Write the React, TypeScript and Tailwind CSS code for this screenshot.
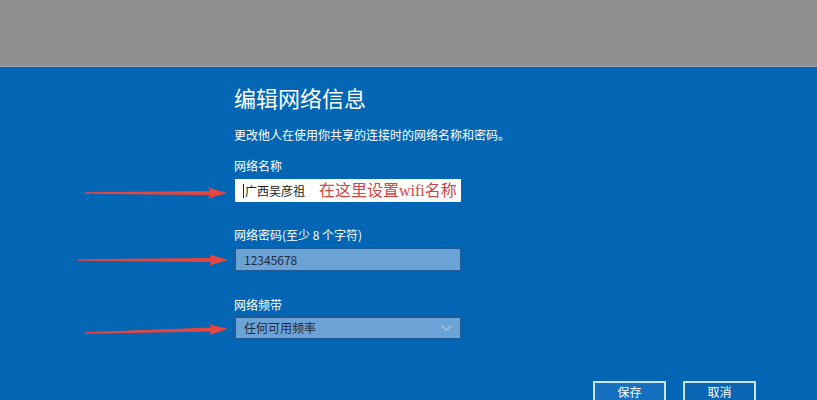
import React from "react";

const cjk = { fontFamily: '"Noto Sans CJK SC", "Noto Sans", sans-serif' };

function Arrow({ len, tilt = 0 }: { len: number; tilt?: number }) {
  const L = len;
  return (
    <svg width={L} height={14} viewBox={`0 0 ${L} 14`} className="overflow-visible">
      <g transform={`rotate(${tilt} ${L} 7)`}>
        <polygon
          points={`0,6.3 ${L - 17},5 ${L - 19},1.5 ${L},7 ${L - 19},12.5 ${L - 17},9 0,7.7`}
          fill="#e8453f"
        />
      </g>
    </svg>
  );
}

export default function App() {
  return (
    <div className="w-[817px] h-[400px] overflow-hidden flex flex-col" style={cjk}>
      <div className="h-[67px] bg-[#8e8e8e] border-b border-[#9ba6b4] shrink-0" />
      <div className="flex-1 bg-[#0366b4] pl-[234px] flex flex-col text-white">
        <div className="mt-[16px] text-[22px] leading-[28px]">编辑网络信息</div>
        <div className="mt-[16px] text-[12px] leading-[16px]">更改他人在使用你共享的连接时的网络名称和密码。</div>
        <div className="mt-[15px] text-[12px] leading-[16px]">网络名称</div>
        <div className="relative mt-[5px] ml-[1px] w-[226px] h-[23px] bg-white flex items-center pl-[8px] whitespace-nowrap">
          <div className="absolute left-[-150px] top-[7px]">
            <Arrow len={142} />
          </div>
          <span className="w-px h-[14px] bg-[#222] mr-[1px]" />
          <span className="text-[12px] text-[#1b1b1b]">广西吴彦祖</span>
          <span
            className="ml-[14px] text-[16px] leading-[20px] text-[#d24545]"
            style={{ fontFamily: '"Liberation Serif", "Noto Sans CJK SC", serif' }}
          >
            在这里设置wifi名称
          </span>
        </div>
        <div className="mt-[25px] text-[12px] leading-[16px]">网络密码(至少 8 个字符)</div>
        <div className="relative mt-[4px] w-[228px] h-[25px] bg-[#6ca3d6] border-2 border-[#1e5a94] flex items-center pl-[8px] text-[12px] text-[#1c2c3c]">
          <div className="absolute left-[-158px] top-[4px]">
            <Arrow len={150} />
          </div>
          12345678
        </div>
        <div className="mt-[25px] text-[12px] leading-[16px]">网络频带</div>
        <div className="relative mt-[3px] w-[228px] h-[24px] bg-[#6ca3d6] border-2 border-[#1e5a94] flex items-center pl-[8px] pr-[8px] text-[12px] text-[#1c2c3c]">
          <div className="absolute left-[-151px] top-[4px]">
            <Arrow len={143} tilt={-1.6} />
          </div>
          <span className="flex-1">任何可用频率</span>
          <svg width="11" height="7" viewBox="0 0 11 7">
            <polyline points="1,1 5.5,5.5 10,1" fill="none" stroke="#a9c8e6" strokeWidth="1.2" />
          </svg>
        </div>
        <div className="mt-[41px] ml-[359px] flex gap-[17px]">
          <div className="w-[73px] h-[30px] border-2 border-[#cde2f4] bg-[#1670c0] flex justify-center pt-[1px] text-[12px] leading-[16px]">保存</div>
          <div className="w-[73px] h-[30px] border-2 border-[#cde2f4] bg-[#0a66b3] flex justify-center pt-[1px] text-[12px] leading-[16px]">取消</div>
        </div>
      </div>
    </div>
  );
}
